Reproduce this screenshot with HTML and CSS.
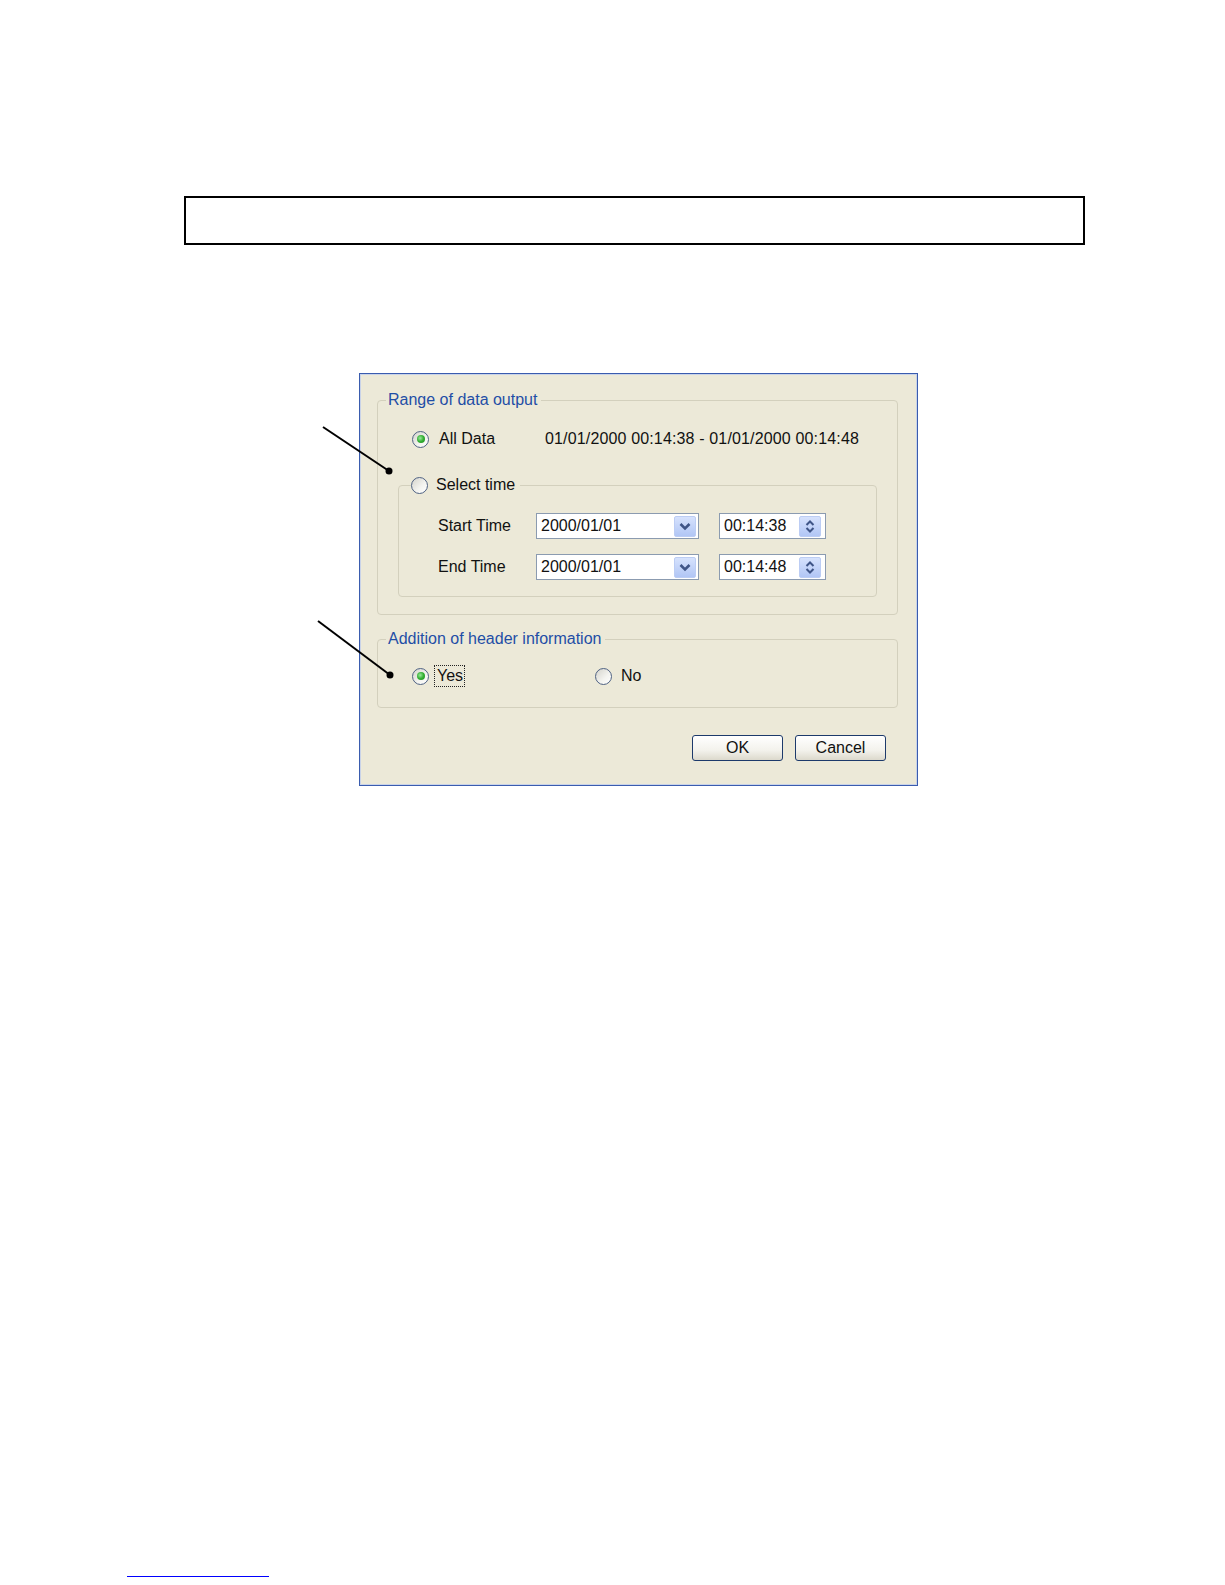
FILE: index.html
```html
<!DOCTYPE html>
<html lang="en">
<head>
    <meta charset="UTF-8">
    <meta name="viewport" content="width=device-width, initial-scale=1.0">
    <title>Data Output</title>
    <link rel="stylesheet" href="styles.css">
</head>
<body>
<div class="page">
    <!-- empty note frame -->
    <div class="note-box"></div>

    <!-- Output dialog -->
    <div class="dialog">
        <fieldset class="group">
            <legend>Range of data output</legend>
            <div class="group-body range-body">
                <div class="option-row">
                    <span class="radio checked"></span>
                    <span class="all-label">All Data</span>
                    <span class="range-text">01/01/2000 00:14:38 - 01/01/2000 00:14:48</span>
                </div>

                <fieldset class="group inner">
                    <legend class="radio-legend"><span class="radio"></span><span>Select time</span></legend>
                    <div class="time-row first">
                        <span class="field-label">Start Time</span>
                        <div class="combo">
                            <span class="value">2000/01/01</span>
                            <span class="drop-btn">
                                <svg width="12" height="9" viewBox="0 0 12 9"><path d="M1.5 2 L6 6.5 L10.5 2" fill="none" stroke="#3f5587" stroke-width="2.6"/></svg>
                            </span>
                        </div>
                        <div class="spin">
                            <span class="value">00:14:38</span>
                            <span class="spin-btn">
                                <svg width="10" height="15" viewBox="0 0 10 15"><path d="M1.5 6 L5 2.5 L8.5 6 M1.5 9 L5 12.5 L8.5 9" fill="none" stroke="#3f5587" stroke-width="2"/></svg>
                            </span>
                        </div>
                    </div>
                    <div class="time-row">
                        <span class="field-label">End Time</span>
                        <div class="combo">
                            <span class="value">2000/01/01</span>
                            <span class="drop-btn">
                                <svg width="12" height="9" viewBox="0 0 12 9"><path d="M1.5 2 L6 6.5 L10.5 2" fill="none" stroke="#3f5587" stroke-width="2.6"/></svg>
                            </span>
                        </div>
                        <div class="spin">
                            <span class="value">00:14:48</span>
                            <span class="spin-btn">
                                <svg width="10" height="15" viewBox="0 0 10 15"><path d="M1.5 6 L5 2.5 L8.5 6 M1.5 9 L5 12.5 L8.5 9" fill="none" stroke="#3f5587" stroke-width="2"/></svg>
                            </span>
                        </div>
                    </div>
                </fieldset>
            </div>
        </fieldset>

        <fieldset class="group header-group">
            <legend>Addition of header information</legend>
            <div class="group-body header-body">
                <div class="option-row">
                    <span class="option yes">
                        <span class="radio checked"></span>
                        <span class="focus">Yes</span>
                    </span>
                    <span class="option">
                        <span class="radio"></span>
                        <span>No</span>
                    </span>
                </div>
            </div>
        </fieldset>

        <div class="buttons">
            <button type="button">OK</button>
            <button type="button">Cancel</button>
        </div>
    </div>

    <div class="footnote-rule"></div>

    <!-- callout pointers -->
    <svg class="pointers" width="1225" height="1585" viewBox="0 0 1225 1585">
        <line x1="323" y1="427" x2="389" y2="471" stroke="#000" stroke-width="2"/>
        <circle cx="389" cy="471" r="3.5" fill="#000"/>
        <line x1="318" y1="621" x2="390" y2="675" stroke="#000" stroke-width="2"/>
        <circle cx="390" cy="675" r="3.5" fill="#000"/>
    </svg>
</div>
</body>
</html>
```

FILE: styles.css
```css
body {
    margin: 0;
    padding: 0;
    background-color: #fff;
    font-family: "Liberation Sans", Arial, sans-serif;
    font-size: 16px;
    color: #111;
}

.page {
    position: relative;
    width: 1225px;
    height: 1585px;
    overflow: hidden;
}

.note-box {
    margin: 196px 0 0 184px;
    width: 901px;
    height: 49px;
    box-sizing: border-box;
    border: 2px solid #000;
}

.dialog {
    margin: 128px 0 0 359px;
    width: 559px;
    height: 413px;
    box-sizing: border-box;
    padding: 17px 19px 0 17px;
    border: 1px solid #3a5cae;
    box-shadow: inset 0 0 0 1px #c9d3e8;
    background-color: #ece9d8;
}

.group {
    margin: 0;
    padding: 0;
    min-width: 0;
    border: 1px solid #d3d0bd;
    border-radius: 4px;
}

.group legend {
    margin-left: 8px;
    padding: 0 4px 0 2px;
    line-height: 18px;
    color: #1f4ea6;
}

.range-body {
    padding: 18px 20px 17px 20px;
}

.option-row {
    display: flex;
    align-items: center;
    height: 24px;
    padding-left: 14px;
}

.radio {
    position: relative;
    flex: none;
    width: 17px;
    height: 17px;
    box-sizing: border-box;
    border: 1px solid #4f6283;
    border-radius: 50%;
    background: linear-gradient(135deg, #d4d3cc 0%, #f4f4f0 60%, #fff 100%);
}

.radio.checked::after {
    content: "";
    position: absolute;
    left: 3.5px;
    top: 3.5px;
    width: 8px;
    height: 8px;
    border-radius: 50%;
    background: radial-gradient(circle at 40% 40%, #9be89b 0%, #33b033 50%, #1d8a1d 100%);
}

.all-label {
    width: 106px;
    margin-left: 10px;
}

.range-text {
    letter-spacing: 0.15px;
}

.inner {
    margin-top: 24px;
}

.inner .radio-legend {
    display: flex;
    align-items: center;
    gap: 8px;
    margin-left: 12px;
    padding: 0 5px 0 0;
    line-height: 20px;
    color: #111;
}

.time-row {
    display: flex;
    align-items: center;
    margin-top: 15px;
    padding-left: 39px;
}

.time-row.first {
    margin-top: 18px;
}

.inner .time-row:last-child {
    margin-bottom: 16px;
}

.field-label {
    width: 98px;
}

.combo, .spin {
    display: flex;
    align-items: center;
    justify-content: space-between;
    height: 26px;
    box-sizing: border-box;
    padding: 0 2px 0 4px;
    border: 1px solid #8b9bb0;
    background-color: #fff;
}

.combo {
    width: 163px;
}

.spin {
    width: 107px;
    margin-left: 20px;
    padding-right: 4px;
}

.drop-btn, .spin-btn {
    display: flex;
    align-items: center;
    justify-content: center;
    width: 22px;
    height: 21px;
    box-sizing: border-box;
    border: 1px solid #bccdf4;
    border-radius: 2px;
    background: linear-gradient(#d6e2fd, #b1c6f5);
}

.header-group {
    margin-top: 15px;
}

.header-body {
    padding: 16px 0 19px 0;
}

.header-body .option-row {
    padding-left: 34px;
}

.option {
    display: flex;
    align-items: center;
    gap: 9px;
}

.option.yes {
    width: 183px;
    gap: 5px;
}

.focus {
    padding: 0 1px 0 2px;
    line-height: 20px;
    border: 1px dotted #222;
}

.buttons {
    display: flex;
    justify-content: flex-end;
    gap: 12px;
    margin-top: 27px;
    padding-right: 12px;
}

button {
    width: 91px;
    height: 26px;
    padding: 0;
    border: 1px solid #1d3a6b;
    border-radius: 3px;
    background: linear-gradient(#ffffff 0%, #f3f2ec 60%, #dcd9cc 100%);
    font-family: "Liberation Sans", Arial, sans-serif;
    font-size: 16px;
    color: #111;
}

.footnote-rule {
    margin: 790px 0 0 127px;
    width: 142px;
    height: 1px;
    background-color: #0000ff;
}

.pointers {
    position: absolute;
    left: 0;
    top: 0;
    pointer-events: none;
}
```
